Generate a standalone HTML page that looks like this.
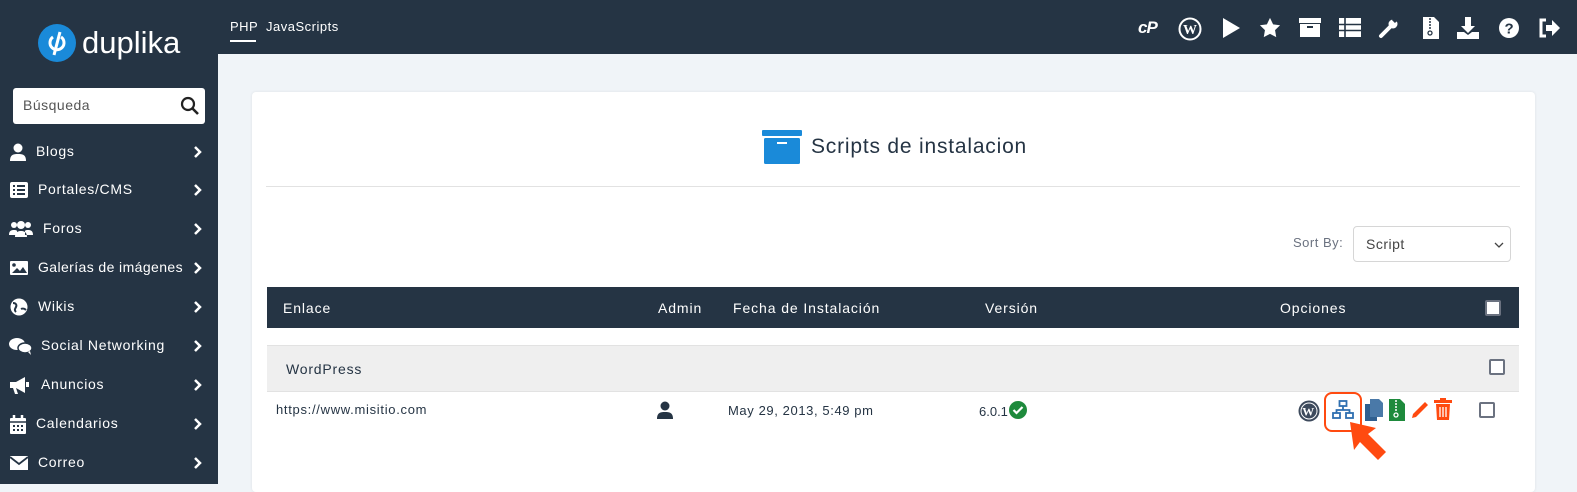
<!DOCTYPE html>
<html><head><meta charset="utf-8"><style>
*{box-sizing:border-box;margin:0;padding:0}
body{width:1577px;height:484px;overflow:hidden;background:#f0f4f8;font-family:"Liberation Sans",sans-serif;position:relative;color:#253444;letter-spacing:0.5px}
.a{position:absolute}
#side{left:0;top:0;width:218px;height:484px;background:#253444}
#top{left:218px;top:0;width:1359px;height:54px;background:#253444}
.nav{color:#fff;font-size:14px}
.mi{position:absolute;left:0;width:218px;color:#fff;font-size:14px;height:20px;letter-spacing:0.7px}
.mi svg{position:absolute;left:9px;top:1px}
.mi span{position:absolute;top:1px}
.mi .ch{position:absolute;left:193px;top:3px}
.ti svg{position:absolute;top:17px}
#card{left:252px;top:92px;width:1283px;height:400px;background:#fff;border-radius:4px;box-shadow:0 0 3px rgba(0,0,0,.08)}
.cb{width:16px;height:16px;border:2px solid #6b7280;border-radius:2px;background:#fff}
.th span{font-size:14px;letter-spacing:0.9px}
</style></head><body>
<div class="a" id="side">
 <svg class="a" style="left:38px;top:24px" width="38" height="38" viewBox="0 0 38 38"><circle cx="19" cy="19" r="19" fill="#1a8ad9"/><path d="M15 13a7 7 0 1 0 8 0" stroke="#fff" stroke-width="3" fill="none"/><path d="M22 8 16 31" stroke="#fff" stroke-width="3"/></svg>
 <div class="a" style="left:82px;top:25px;color:#fff;font-size:31px;letter-spacing:0">duplika</div>
 <div class="a" style="left:13px;top:88px;width:192px;height:36px;background:#fff;border-radius:3px"><span class="a" style="left:10px;top:9px;font-size:14px;color:#555">Búsqueda</span>
 <svg class="a" style="left:167px;top:8px" width="20" height="20" viewBox="0 0 20 20"><circle cx="8" cy="8" r="6" stroke="#222" stroke-width="2.2" fill="none"/><path d="M12.5 12.5 18 18" stroke="#222" stroke-width="2.6"/></svg></div>

 <div class="mi" style="top:142px"><svg width="20" height="18" viewBox="0 0 20 18"><circle cx="9" cy="5" r="4.5" fill="#fff"/><path d="M1 18c0-6 3-7 8-7s8 1 8 7z" fill="#fff"/></svg><span style="left:36px">Blogs</span><svg class="ch" width="10" height="14" viewBox="0 0 10 14"><path d="M2 2l5 5-5 5" stroke="#fff" stroke-width="2.5" fill="none"/></svg></div>
 <div class="mi" style="top:180px"><svg width="20" height="18" viewBox="0 0 20 18"><rect x="1" y="1" width="18" height="16" rx="2" fill="#fff"/><path d="M4 5h2M8 5h8M4 9h2M8 9h8M4 13h2M8 13h8" stroke="#253444" stroke-width="2"/></svg><span style="left:38px">Portales/CMS</span><svg class="ch" width="10" height="14" viewBox="0 0 10 14"><path d="M2 2l5 5-5 5" stroke="#fff" stroke-width="2.5" fill="none"/></svg></div>
 <div class="mi" style="top:219px"><svg width="24" height="18" viewBox="0 0 24 18"><circle cx="5" cy="5" r="3" fill="#fff"/><circle cx="19" cy="5" r="3" fill="#fff"/><circle cx="12" cy="5" r="4" fill="#fff"/><path d="M0 15c0-4 2-5 5-5s3 1 3 1v4zM24 15c0-4-2-5-5-5s-3 1-3 1v4zM6 17c0-5 3-6 6-6s6 1 6 6z" fill="#fff"/></svg><span style="left:43px">Foros</span><svg class="ch" width="10" height="14" viewBox="0 0 10 14"><path d="M2 2l5 5-5 5" stroke="#fff" stroke-width="2.5" fill="none"/></svg></div>
 <div class="mi" style="top:258px"><svg width="20" height="18" viewBox="0 0 20 18"><rect x="1" y="2" width="18" height="14" rx="1" fill="#fff"/><circle cx="5" cy="6" r="1.8" fill="#253444"/><path d="M3 14l5-5 3 3 3-4 4 6z" fill="#253444"/></svg><span style="left:38px;letter-spacing:0.4px">Galerías de imágenes</span><svg class="ch" width="10" height="14" viewBox="0 0 10 14"><path d="M2 2l5 5-5 5" stroke="#fff" stroke-width="2.5" fill="none"/></svg></div>
 <div class="mi" style="top:297px"><svg width="20" height="18" viewBox="0 0 20 18"><circle cx="10" cy="9" r="8.5" fill="#fff"/><path d="M4 5c3 0 4 2 3 4s-2 3 0 5M12 11c2-1 4 0 5 1" stroke="#253444" stroke-width="2" fill="none"/></svg><span style="left:38px">Wikis</span><svg class="ch" width="10" height="14" viewBox="0 0 10 14"><path d="M2 2l5 5-5 5" stroke="#fff" stroke-width="2.5" fill="none"/></svg></div>
 <div class="mi" style="top:336px"><svg width="24" height="18" viewBox="0 0 24 18"><ellipse cx="8" cy="7" rx="8" ry="6" fill="#fff"/><ellipse cx="16" cy="11" rx="7" ry="5" fill="#fff" stroke="#253444" stroke-width="1.5"/><path d="M19 15l3 3-1-4z" fill="#fff"/></svg><span style="left:41px">Social Networking</span><svg class="ch" width="10" height="14" viewBox="0 0 10 14"><path d="M2 2l5 5-5 5" stroke="#fff" stroke-width="2.5" fill="none"/></svg></div>
 <div class="mi" style="top:375px"><svg width="22" height="18" viewBox="0 0 22 18"><path d="M1 6h6l9-5v16l-9-5H1z" fill="#fff"/><path d="M4 12l2 6h3l-2-6z" fill="#fff"/><rect x="17" y="6" width="3" height="5" fill="#fff"/></svg><span style="left:41px">Anuncios</span><svg class="ch" width="10" height="14" viewBox="0 0 10 14"><path d="M2 2l5 5-5 5" stroke="#fff" stroke-width="2.5" fill="none"/></svg></div>
 <div class="mi" style="top:414px"><svg width="18" height="20" viewBox="0 0 18 20"><rect x="1" y="3" width="16" height="16" rx="1" fill="#fff"/><path d="M5 0v5M13 0v5" stroke="#fff" stroke-width="2.5"/><path d="M1 7h16" stroke="#253444" stroke-width="1.5"/><path d="M4 11h2M8 11h2M12 11h2M4 15h2M8 15h2M12 15h2" stroke="#253444" stroke-width="2"/></svg><span style="left:36px">Calendarios</span><svg class="ch" width="10" height="14" viewBox="0 0 10 14"><path d="M2 2l5 5-5 5" stroke="#fff" stroke-width="2.5" fill="none"/></svg></div>
 <div class="mi" style="top:453px"><svg width="20" height="18" viewBox="0 0 20 18"><rect x="1" y="2" width="18" height="14" fill="#fff"/><path d="M1 3l9 7 9-7" stroke="#253444" stroke-width="1.8" fill="none"/></svg><span style="left:38px">Correo</span><svg class="ch" width="10" height="14" viewBox="0 0 10 14"><path d="M2 2l5 5-5 5" stroke="#fff" stroke-width="2.5" fill="none"/></svg></div>
</div>

<div class="a ti" id="top">
 <span class="a nav" style="left:12px;top:19px;font-size:13px">PHP</span>
 <div class="a" style="left:12px;top:40px;width:26px;height:2px;background:#fff"></div>
 <span class="a nav" style="left:48px;top:19px;font-size:13px">JavaScripts</span>
 <svg style="left:920px" width="24" height="20" viewBox="0 0 24 20"><text x="0" y="16" fill="#fff" font-family="Liberation Sans" font-weight="bold" font-style="italic" font-size="17" letter-spacing="-1">cP</text></svg>
 <svg style="left:960px" width="24" height="24" viewBox="0 0 24 24"><circle cx="12" cy="12" r="10.5" stroke="#fff" stroke-width="2" fill="none"/><text x="5" y="17" fill="#fff" font-family="Liberation Serif" font-weight="bold" font-size="14">W</text></svg>
 <svg style="left:1003px" width="20" height="22" viewBox="0 0 20 22"><path d="M2 1l17 10L2 21z" fill="#fff"/></svg>
 <svg style="left:1041px" width="22" height="22" viewBox="0 0 24 24"><path d="M12 1l3.4 7 7.6 1-5.5 5.3 1.3 7.7L12 18.4 5.2 22l1.3-7.7L1 9l7.6-1z" fill="#fff"/></svg>
 <svg style="left:1081px" width="22" height="22" viewBox="0 0 22 22"><rect x="0" y="1" width="22" height="5" fill="#fff"/><rect x="1" y="7" width="20" height="13" fill="#fff"/><rect x="8" y="9" width="6" height="2" fill="#253444"/></svg>
 <svg style="left:1121px" width="22" height="22" viewBox="0 0 22 22"><rect x="0" y="1" width="22" height="19" fill="#fff"/><path d="M0 7.5h22M0 13.5h22M6 1v19" stroke="#253444" stroke-width="1.6"/></svg>
 <svg style="left:1160px" width="22" height="22" viewBox="0 0 22 22"><path d="M3 19l9-9" stroke="#fff" stroke-width="4" stroke-linecap="round"/><circle cx="15" cy="7" r="4.5" fill="#fff"/><path d="M15 2l3 3" stroke="#253444" stroke-width="3"/></svg>
 <svg style="left:1204px" width="18" height="22" viewBox="0 0 18 22"><path d="M1 0h11l5 5v17H1z" fill="#fff"/><path d="M8 1v12" stroke="#253444" stroke-width="1.5" stroke-dasharray="2 1"/><circle cx="8" cy="16" r="2" fill="none" stroke="#253444" stroke-width="1.3"/></svg>
 <svg style="left:1239px" width="22" height="22" viewBox="0 0 22 22"><path d="M8 0h6v9h4l-7 7-7-7h4z" fill="#fff"/><path d="M0 15h7l4 3 4-3h7v7H0z" fill="#fff"/></svg>
 <svg style="left:1280px" width="22" height="22" viewBox="0 0 22 22"><circle cx="11" cy="11" r="10" fill="#fff"/><text x="6.5" y="16.5" fill="#253444" font-family="Liberation Sans" font-weight="bold" font-size="15">?</text></svg>
 <svg style="left:1320px" width="22" height="22" viewBox="0 0 22 22"><path d="M8 3H3v16h5" stroke="#fff" stroke-width="3" fill="none"/><path d="M8 8h6V3l8 8-8 8v-5H8z" fill="#fff"/></svg>
</div>

<div class="a" id="card">
 <svg class="a" style="left:510px;top:38px" width="40" height="34" viewBox="0 0 40 34"><rect x="0" y="0" width="40" height="6" rx="1" fill="#1a8ad9"/><rect x="2" y="8" width="36" height="26" rx="1.5" fill="#1a8ad9"/><rect x="15" y="12" width="10" height="2" fill="#fff"/></svg>
 <div class="a" style="left:559px;top:43px;font-size:21px;color:#253444;letter-spacing:0.8px">Scripts de instalacion</div>
 <div class="a" style="left:14px;top:94px;width:1254px;height:1px;background:#e2e2e2"></div>
 <div class="a" style="left:1041px;top:143px;font-size:13px;color:#6b7280">Sort By:</div>
 <div class="a" style="left:1101px;top:134px;width:158px;height:36px;border:1px solid #d6d6d6;border-radius:4px"><span class="a" style="left:12px;top:9px;font-size:14px;color:#444">Script</span><svg class="a" style="left:140px;top:14px" width="10" height="8" viewBox="0 0 10 8"><path d="M1 2l4 4 4-4" stroke="#444" stroke-width="1.3" fill="none"/></svg></div>
 <div class="a th" style="left:15px;top:195px;width:1252px;height:41px;background:#253444;color:#fff">
  <span class="a" style="left:16px;top:13px">Enlace</span>
  <span class="a" style="left:391px;top:13px">Admin</span>
  <span class="a" style="left:466px;top:13px">Fecha de Instalación</span>
  <span class="a" style="left:718px;top:13px">Versión</span>
  <span class="a" style="left:1013px;top:13px">Opciones</span>
  <div class="a cb" style="left:1218px;top:13px"></div>
 </div>
 <div class="a" style="left:15px;top:253px;width:1252px;height:46px;background:#efefef;border-top:1px solid #e2e2e2">
  <span class="a" style="left:19px;top:15px;font-size:14px;color:#253444;letter-spacing:0.8px">WordPress</span>
  <div class="a cb" style="left:1222px;top:13px"></div>
 </div>
 <div class="a" style="left:15px;top:299px;width:1252px;height:1px;background:#e2e2e2"></div>
 <span class="a" style="left:24px;top:310px;font-size:13px;color:#253444;letter-spacing:0.7px">https://www.misitio.com</span>
 <svg class="a" style="left:404px;top:309px" width="18" height="18" viewBox="0 0 18 18"><circle cx="9" cy="5" r="4.5" fill="#253444"/><path d="M1 18c0-6 3-7 8-7s8 1 8 7z" fill="#253444"/></svg>
 <span class="a" style="left:476px;top:311px;font-size:13px;color:#253444;letter-spacing:0.6px">May 29, 2013, 5:49 pm</span>
 <span class="a" style="left:727px;top:312px;font-size:13px;color:#253444;letter-spacing:0">6.0.1</span>
 <svg class="a" style="left:757px;top:309px" width="18" height="18" viewBox="0 0 18 18"><circle cx="9" cy="9" r="9" fill="#1e8a3c"/><path d="M4.5 9l3 3 6-6" stroke="#fff" stroke-width="2.2" fill="none"/></svg>
 <svg class="a" style="left:1046px;top:308px" width="22" height="22" viewBox="0 0 22 22"><circle cx="11" cy="11" r="10.5" fill="#3d4a5c"/><circle cx="11" cy="11" r="8.5" fill="#fff"/><circle cx="11" cy="11" r="7.5" fill="#3d4a5c"/><text x="4.3" y="15.5" fill="#fff" font-family="Liberation Serif" font-weight="bold" font-size="12">W</text></svg>
 <div class="a" style="left:1072px;top:300px;width:38px;height:40px;border:2.5px solid #ff4a10;border-radius:8px"></div>
 <svg class="a" style="left:1080px;top:308px" width="22" height="20" viewBox="0 0 22 20"><g fill="none" stroke="#2f6fb0" stroke-width="1.8"><rect x="7.5" y="1" width="7" height="5"/><rect x="1" y="13" width="7" height="5"/><rect x="14" y="13" width="7" height="5"/><path d="M11 6v4M4.5 13v-3h13v3"/></g></svg>
 <svg class="a" style="left:1113px;top:307px" width="18" height="22" viewBox="0 0 18 22"><rect x="0" y="5" width="12" height="17" fill="#2f5f8f"/><path d="M5 0h9l4 4v14H5z" fill="#4a79a8"/></svg>
 <svg class="a" style="left:1137px;top:307px" width="16" height="22" viewBox="0 0 16 22"><path d="M0 0h11l5 5v17H0z" fill="#1e8a3c"/><path d="M7 1v12" stroke="#fff" stroke-width="1.5" stroke-dasharray="2 1"/><circle cx="7" cy="16" r="2" fill="none" stroke="#fff" stroke-width="1.3"/></svg>
 <svg class="a" style="left:1158px;top:307px" width="20" height="22" viewBox="0 0 20 22"><path d="M3 15L15 3l3 3L6 18l-4 1z" fill="#ff4a10"/></svg>
 <svg class="a" style="left:1182px;top:306px" width="18" height="22" viewBox="0 0 18 22"><rect x="0" y="2" width="18" height="3" fill="#ff4a10"/><rect x="6" y="0" width="6" height="3" fill="#ff4a10"/><path d="M2 6h14l-1 16H3z" fill="#ff4a10"/><path d="M6 9v10M9 9v10M12 9v10" stroke="#fff" stroke-width="1.3"/></svg>
 <div class="a cb" style="left:1227px;top:310px"></div>
 <svg class="a" style="left:1094px;top:328px" width="42" height="46" viewBox="0 0 42 46"><path d="M4 2l26 6-8 6 18 18-8 8-18-18-6 8z" fill="#ff4a10"/></svg>
</div>
</body></html>
